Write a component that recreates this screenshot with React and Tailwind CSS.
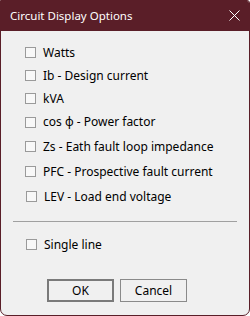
import React from "react";

const options = [
  { label: "Watts", h: "h-[23px]" },
  { label: "Ib - Design current", h: "h-[23px]" },
  { label: "kVA", h: "h-[23px]" },
  { label: "cos φ - Power factor", h: "h-[24px]" },
  { label: "Zs - Eath fault loop impedance", h: "h-[25px]" },
  { label: "PFC - Prospective fault current", h: "h-[25px]" },
  { label: "LEV - Load end voltage", h: "h-[25px]", shift: true },
];

function Check({ label, h, shift }) {
  return (
    <label className={`flex items-center ${h} ${shift ? "pl-[25px]" : "pl-[24px]"}`}>
      <span className="w-[11px] h-[11px] border border-[#9a9a9a] bg-[#f8f8f8]" />
      <span className="ml-[7px]">{label}</span>
    </label>
  );
}

export default function App() {
  return (
    <div className="w-[250px] h-[316px] bg-white" style={{ fontFamily: '"Noto Sans", "Open Sans", sans-serif' }}>
      <div className="w-[250px] h-[316px] flex flex-col border border-[#5a1e28] rounded-tr-[3px] rounded-b-[7px] overflow-hidden bg-[#f0f0f0]">
        <div className="h-[30px] shrink-0 bg-[#5a1e28] flex items-center justify-between pl-[9px] pr-[9px]">
          <span className="text-white text-[11.5px]">Circuit Display Options</span>
          <svg width="11" height="11" viewBox="0 0 11 11" className="mb-px">
            <path d="M0.5 0.5 L10.5 10.5 M10.5 0.5 L0.5 10.5" stroke="#ffffff" strokeWidth="1" />
          </svg>
        </div>
        <div className="flex-1 flex flex-col text-[12px] text-black">
          <div className="pt-[10px]">
            {options.map((o) => (
              <Check key={o.label} {...o} />
            ))}
          </div>
          <div className="mx-[12px] mt-[12px] h-px bg-[#a0a0a0]" />
          <div className="mt-[11px]">
            <Check label="Single line" h="h-[23px]" shift />
          </div>
          <div className="flex gap-[6px] pl-[46px] mt-[23px]">
            <button className="w-[67px] h-[23px] border-2 border-[#7a7a7a] bg-[#f0f0f0] text-[12px] flex items-center justify-center">
              OK
            </button>
            <button className="w-[67px] h-[23px] border border-[#8a8a8a] bg-[#f0f0f0] text-[12px] flex items-center justify-center">
              Cancel
            </button>
          </div>
        </div>
      </div>
    </div>
  );
}
